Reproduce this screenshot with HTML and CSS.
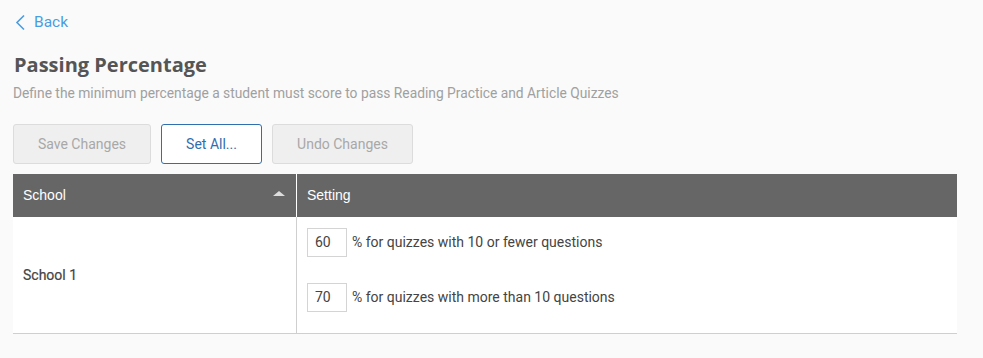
FILE: index.html
```html
<!DOCTYPE html>
<html lang="en">
<head>
<meta charset="utf-8">
<title>Passing Percentage</title>
<link rel="stylesheet" href="styles.css">
</head>
<body>
<div class="page">
  <a class="back" href="#">
    <svg class="back-icon" width="11" height="17" viewBox="0 0 11 17" aria-hidden="true"><path d="M9 1.5 L2 8.5 L9 15.5" fill="none" stroke="#4a9de0" stroke-width="1.6"/></svg>
    <span>Back</span>
  </a>
  <h1 class="title">Passing Percentage</h1>
  <p class="subtitle">Define the minimum percentage a student must score to pass Reading Practice and Article Quizzes</p>
  <div class="actions">
    <button class="btn btn-disabled btn-save">Save Changes</button>
    <button class="btn btn-primary">Set All...</button>
    <button class="btn btn-disabled btn-undo">Undo Changes</button>
  </div>
  <div class="table">
    <div class="thead">
      <div class="th th-school"><span>School</span><span class="sort"></span></div>
      <div class="th th-setting">Setting</div>
    </div>
    <div class="tbody">
      <div class="td td-school">School 1</div>
      <div class="td td-setting">
        <div class="setting-row"><span class="pct-input">60</span><span>% for quizzes with 10 or fewer questions</span></div>
        <div class="setting-row"><span class="pct-input">70</span><span>% for quizzes with more than 10 questions</span></div>
      </div>
    </div>
  </div>
</div>
</body>
</html>
```
FILE: styles.css
```css
html, body {
  margin: 0;
  padding: 0;
  background: #fafafa;
}
body {
  font-family: Roboto, "Liberation Sans", Arial, sans-serif;
  color: #444;
}
.page {
  padding: 12px 26px 0 13px;
}
.back {
  display: inline-flex;
  align-items: center;
  gap: 8px;
  margin-left: 2px;
  color: #4a9de0;
  text-decoration: none;
  font-size: 15.5px;
  height: 20px;
}
.back-icon {
  display: block;
}
.title {
  margin: 16px 0 0 1px;
  font-family: "Open Sans", sans-serif;
  font-weight: 700;
  font-size: 20px;
  line-height: 28px;
  color: #555;
}
.subtitle {
  margin: 4px 0 0 0;
  font-size: 13.8px;
  line-height: 20px;
  color: #a0a0a0;
}
.actions {
  display: flex;
  gap: 10px;
  margin-top: 21px;
}
.btn {
  height: 40px;
  box-sizing: border-box;
  font-family: Roboto, sans-serif;
  font-size: 14px;
  border-radius: 3px;
  padding: 0;
}
.btn-disabled {
  background: #efefef;
  border: 1px solid #dcdcdc;
  color: #a8a8a8;
}
.btn-save { width: 138px; }
.btn-undo { width: 141px; }
.btn-primary {
  width: 101px;
  background: #fff;
  border: 1px solid #2f6eaf;
  color: #2f6eaf;
}
.table {
  margin-top: 10px;
  background: #fff;
  border-bottom: 1px solid #cfcfcf;
}
.thead {
  display: grid;
  grid-template-columns: 284px 1fr;
  background: #666;
  height: 43px;
}
.th {
  display: flex;
  align-items: center;
  padding-left: 10px;
  color: #fff;
  font-family: "Liberation Sans", Arial, sans-serif;
  font-size: 14px;
}
.th-school {
  justify-content: space-between;
  padding-right: 11px;
  border-right: 1px solid #fff;
}
.sort {
  width: 0;
  height: 0;
  border-left: 6px solid transparent;
  border-right: 6px solid transparent;
  border-bottom: 5px solid #ddd;
  margin-top: -3px;
}
.tbody {
  display: grid;
  grid-template-columns: 284px 1fr;
  height: 116px;
}
.td-school {
  display: flex;
  align-items: center;
  padding-left: 10px;
  border-right: 1px solid #cfcfcf;
  font-size: 14px;
  font-weight: 400;
  color: #444;
  padding-top: 1px;
  -webkit-text-stroke: 0.2px #444;
}
.td-setting {
  display: flex;
  flex-direction: column;
  gap: 26px;
  padding: 11px 0 0 10px;
}
.setting-row {
  display: flex;
  align-items: center;
  gap: 5px;
  font-size: 14px;
  color: #444;
}
.pct-input {
  box-sizing: border-box;
  width: 40px;
  height: 29px;
  border: 1px solid #d4d4d4;
  background: #fff;
  padding-left: 7px;
  display: flex;
  align-items: center;
  font-size: 14px;
  color: #444;
}
```
